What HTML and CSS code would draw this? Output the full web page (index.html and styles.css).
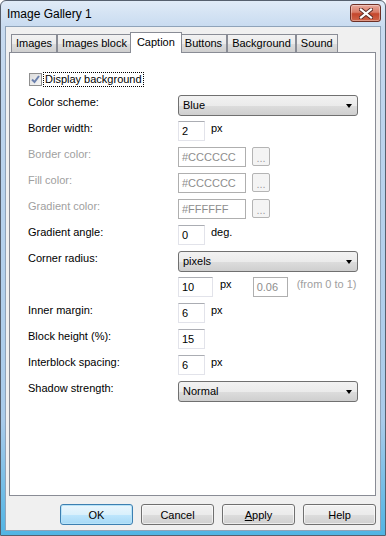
FILE: index.html
```html
<!DOCTYPE html>
<html lang="en">
<head>
    <meta charset="UTF-8">
    <title>Image Gallery 1</title>
    <link rel="stylesheet" href="styles.css">
</head>
<body>
    <div class="window">
        <div class="titlebar">
            <span class="title">Image Gallery 1</span>
            <button class="close" title="Close">
                <svg width="14" height="11" viewBox="0 0 14 11">
                    <path d="M2 1.5 L12 9.5 M12 1.5 L2 9.5" stroke="#5a2a24" stroke-width="4" stroke-linecap="square"/>
                    <path d="M2 1.5 L12 9.5 M12 1.5 L2 9.5" stroke="#fff" stroke-width="2.2" stroke-linecap="square"/>
                </svg>
            </button>
        </div>
        <div class="client">
            <div class="tabs">
                <div class="tab">Images</div>
                <div class="tab">Images block</div>
                <div class="tab selected">Caption</div>
                <div class="tab">Buttons</div>
                <div class="tab">Background</div>
                <div class="tab">Sound</div>
            </div>
            <div class="panel">
                <div class="check-row">
                    <span class="checkbox">
                        <svg width="11" height="11" viewBox="0 0 11 11">
                            <path d="M2 5.5 L4.5 8 L9 2" fill="none" stroke="#6b80ad" stroke-width="2"/>
                        </svg>
                    </span>
                    <span class="focus">Display background</span>
                </div>

                <div class="form">
                    <div class="label">Color scheme:</div>
                    <div class="ctrl"><div class="select">Blue<span class="arrow"></span></div></div>

                    <div class="label">Border width:</div>
                    <div class="ctrl"><div class="input small">2</div><span class="unit">px</span></div>

                    <div class="label disabled">Border color:</div>
                    <div class="ctrl"><div class="input hex off">#CCCCCC</div><div class="dots">...</div></div>

                    <div class="label disabled">Fill color:</div>
                    <div class="ctrl"><div class="input hex off">#CCCCCC</div><div class="dots">...</div></div>

                    <div class="label disabled">Gradient color:</div>
                    <div class="ctrl"><div class="input hex off">#FFFFFF</div><div class="dots">...</div></div>

                    <div class="label">Gradient angle:</div>
                    <div class="ctrl"><div class="input small">0</div><span class="unit">deg.</span></div>

                    <div class="label">Corner radius:</div>
                    <div class="ctrl"><div class="select">pixels<span class="arrow"></span></div></div>

                    <div class="label"></div>
                    <div class="ctrl">
                        <div class="input medium">10</div><span class="unit wide">px</span>
                        <div class="input medium off">0.06</div><span class="unit hint">(from 0 to 1)</span>
                    </div>

                    <div class="label">Inner margin:</div>
                    <div class="ctrl"><div class="input small">6</div><span class="unit">px</span></div>

                    <div class="label">Block height (%):</div>
                    <div class="ctrl"><div class="input small">15</div></div>

                    <div class="label">Interblock spacing:</div>
                    <div class="ctrl"><div class="input small">6</div><span class="unit">px</span></div>

                    <div class="label">Shadow strength:</div>
                    <div class="ctrl"><div class="select">Normal<span class="arrow"></span></div></div>
                </div>
            </div>
            <div class="buttons">
                <button class="btn default">OK</button>
                <button class="btn">Cancel</button>
                <button class="btn"><u>A</u>pply</button>
                <button class="btn">Help</button>
            </div>
        </div>
    </div>
</body>
</html>
```

FILE: styles.css
```css
html, body {
    margin: 0;
    padding: 0;
    background: #fff;
}
body {
    font-family: 'Liberation Sans', Arial, sans-serif;
    font-size: 11px;
    color: #000;
}
.window {
    width: 386px;
    height: 536px;
    box-sizing: border-box;
    border: 1px solid #56606e;
    border-radius: 6px 6px 0 0;
    background: linear-gradient(180deg, #e0ebf7 0px, #c8dbf0 26px, #bcd4ed 120px, #a9cbea 420px, #4fb4e4 536px);
    padding: 0 4px 4px 4px;
    display: flex;
    flex-direction: column;
}

/* title bar */
.titlebar {
    height: 25px;
    display: flex;
    align-items: flex-start;
    justify-content: space-between;
}
.title {
    font-size: 12px;
    margin: 6px 0 0 2px;
    color: #000;
}
.close {
    width: 31px;
    height: 18px;
    margin: 3px 0 0 0;
    padding: 0;
    border: 1px solid #6d3026;
    border-radius: 3px;
    background: linear-gradient(180deg, #e8a99b 0%, #d97c68 45%, #c4462c 55%, #d0654a 100%);
    display: flex;
    align-items: center;
    justify-content: center;
    box-shadow: inset 0 0 0 1px rgba(255, 255, 255, 0.35);
}

/* client area */
.client {
    flex: 1;
    background: #f0f0f0;
    border: 1px solid #8fa3b9;
    padding: 5px 4px 5px 3px;
    display: flex;
    flex-direction: column;
}
.tabs {
    display: flex;
    align-items: flex-end;
    height: 20px;
    padding-left: 2px;
}
.tab {
    height: 18px;
    box-sizing: border-box;
    border: 1px solid #898c95;
    border-bottom: 0;
    padding: 0 4px;
    line-height: 17px;
    background: linear-gradient(180deg, #f2f2f2 0%, #ebebeb 50%, #dddddd 51%, #cfcfcf 100%);
    white-space: nowrap;
}
.tab.selected {
    height: 21px;
    margin: 0 -2px -1px -2px;
    padding: 0 6px;
    line-height: 18px;
    background: #fff;
    position: relative;
    z-index: 1;
}
.panel {
    height: 444px;
    box-sizing: border-box;
    border: 1px solid #898c95;
    background: #fff;
    padding: 19px 0 0 18px;
}

/* checkbox */
.check-row {
    display: flex;
    align-items: center;
    height: 15px;
    margin-left: 1px;
}
.checkbox {
    width: 13px;
    height: 13px;
    box-sizing: border-box;
    border: 1px solid #8f8f8f;
    background: linear-gradient(135deg, #dcdcdc, #f6f6f6);
    display: flex;
    align-items: center;
    justify-content: center;
}
.focus {
    margin-left: 1px;
    border: 1px dotted #000;
    line-height: 13px;
    padding: 0 1px;
}

/* form grid */
.form {
    display: grid;
    grid-template-columns: 150px 1fr;
    grid-auto-rows: 20px;
    row-gap: 6px;
    margin-top: 8px;
}
.label {
    line-height: 13px;
    padding-top: 1px;
}
.label.disabled {
    color: #a0a0a0;
}
.ctrl {
    display: flex;
    align-items: flex-start;
}
.select {
    width: 180px;
    height: 21px;
    box-sizing: border-box;
    border: 1px solid #707070;
    border-radius: 3px;
    background: linear-gradient(180deg, #f2f2f2 0%, #ebebeb 50%, #dddddd 51%, #cfcfcf 100%);
    padding-left: 4px;
    line-height: 19px;
    position: relative;
}
.arrow {
    position: absolute;
    right: 5px;
    top: 8px;
    border-left: 3.5px solid transparent;
    border-right: 3.5px solid transparent;
    border-top: 4px solid #000;
}
.input {
    height: 20px;
    box-sizing: border-box;
    border: 1px solid #e2e3ea;
    border-top-color: #abadb3;
    background: #fff;
    padding-left: 3px;
    line-height: 18px;
}
.input.small { width: 27px; }
.input.medium { width: 35px; }
.input.hex { width: 68px; }
.input.off {
    border-color: #afafaf;
    color: #8d8d8d;
}
.unit {
    margin-left: 6px;
    line-height: 13px;
    padding-top: 1px;
}
.unit.wide {
    margin-left: 7px;
    margin-right: 21px;
}
.unit.hint {
    margin-left: 9px;
    color: #a0a0a0;
}
.dots {
    width: 18px;
    height: 19px;
    box-sizing: border-box;
    margin-left: 6px;
    border: 1px solid #b4b4b4;
    border-radius: 2px;
    background: #f4f4f4;
    color: #a0a0a0;
    text-align: center;
    line-height: 20px;
}

/* dialog buttons */
.buttons {
    display: flex;
    justify-content: flex-end;
    gap: 8px;
    margin-top: 8px;
}
.btn {
    width: 73px;
    height: 21px;
    padding: 0;
    border: 1px solid #707070;
    border-radius: 3px;
    background: linear-gradient(180deg, #f2f2f2 0%, #ebebeb 50%, #dddddd 51%, #cfcfcf 100%);
    box-shadow: inset 0 0 0 1px rgba(255, 255, 255, 0.6);
    font-family: inherit;
    font-size: 11px;
    color: #000;
}
.btn.default {
    border-color: #3c7fb1;
    background: linear-gradient(180deg, #eaf6fd 0%, #d9f0fc 50%, #bee6fd 51%, #a7d9f5 100%);
    box-shadow: inset 0 0 0 1px #b8e3f8;
}
```
